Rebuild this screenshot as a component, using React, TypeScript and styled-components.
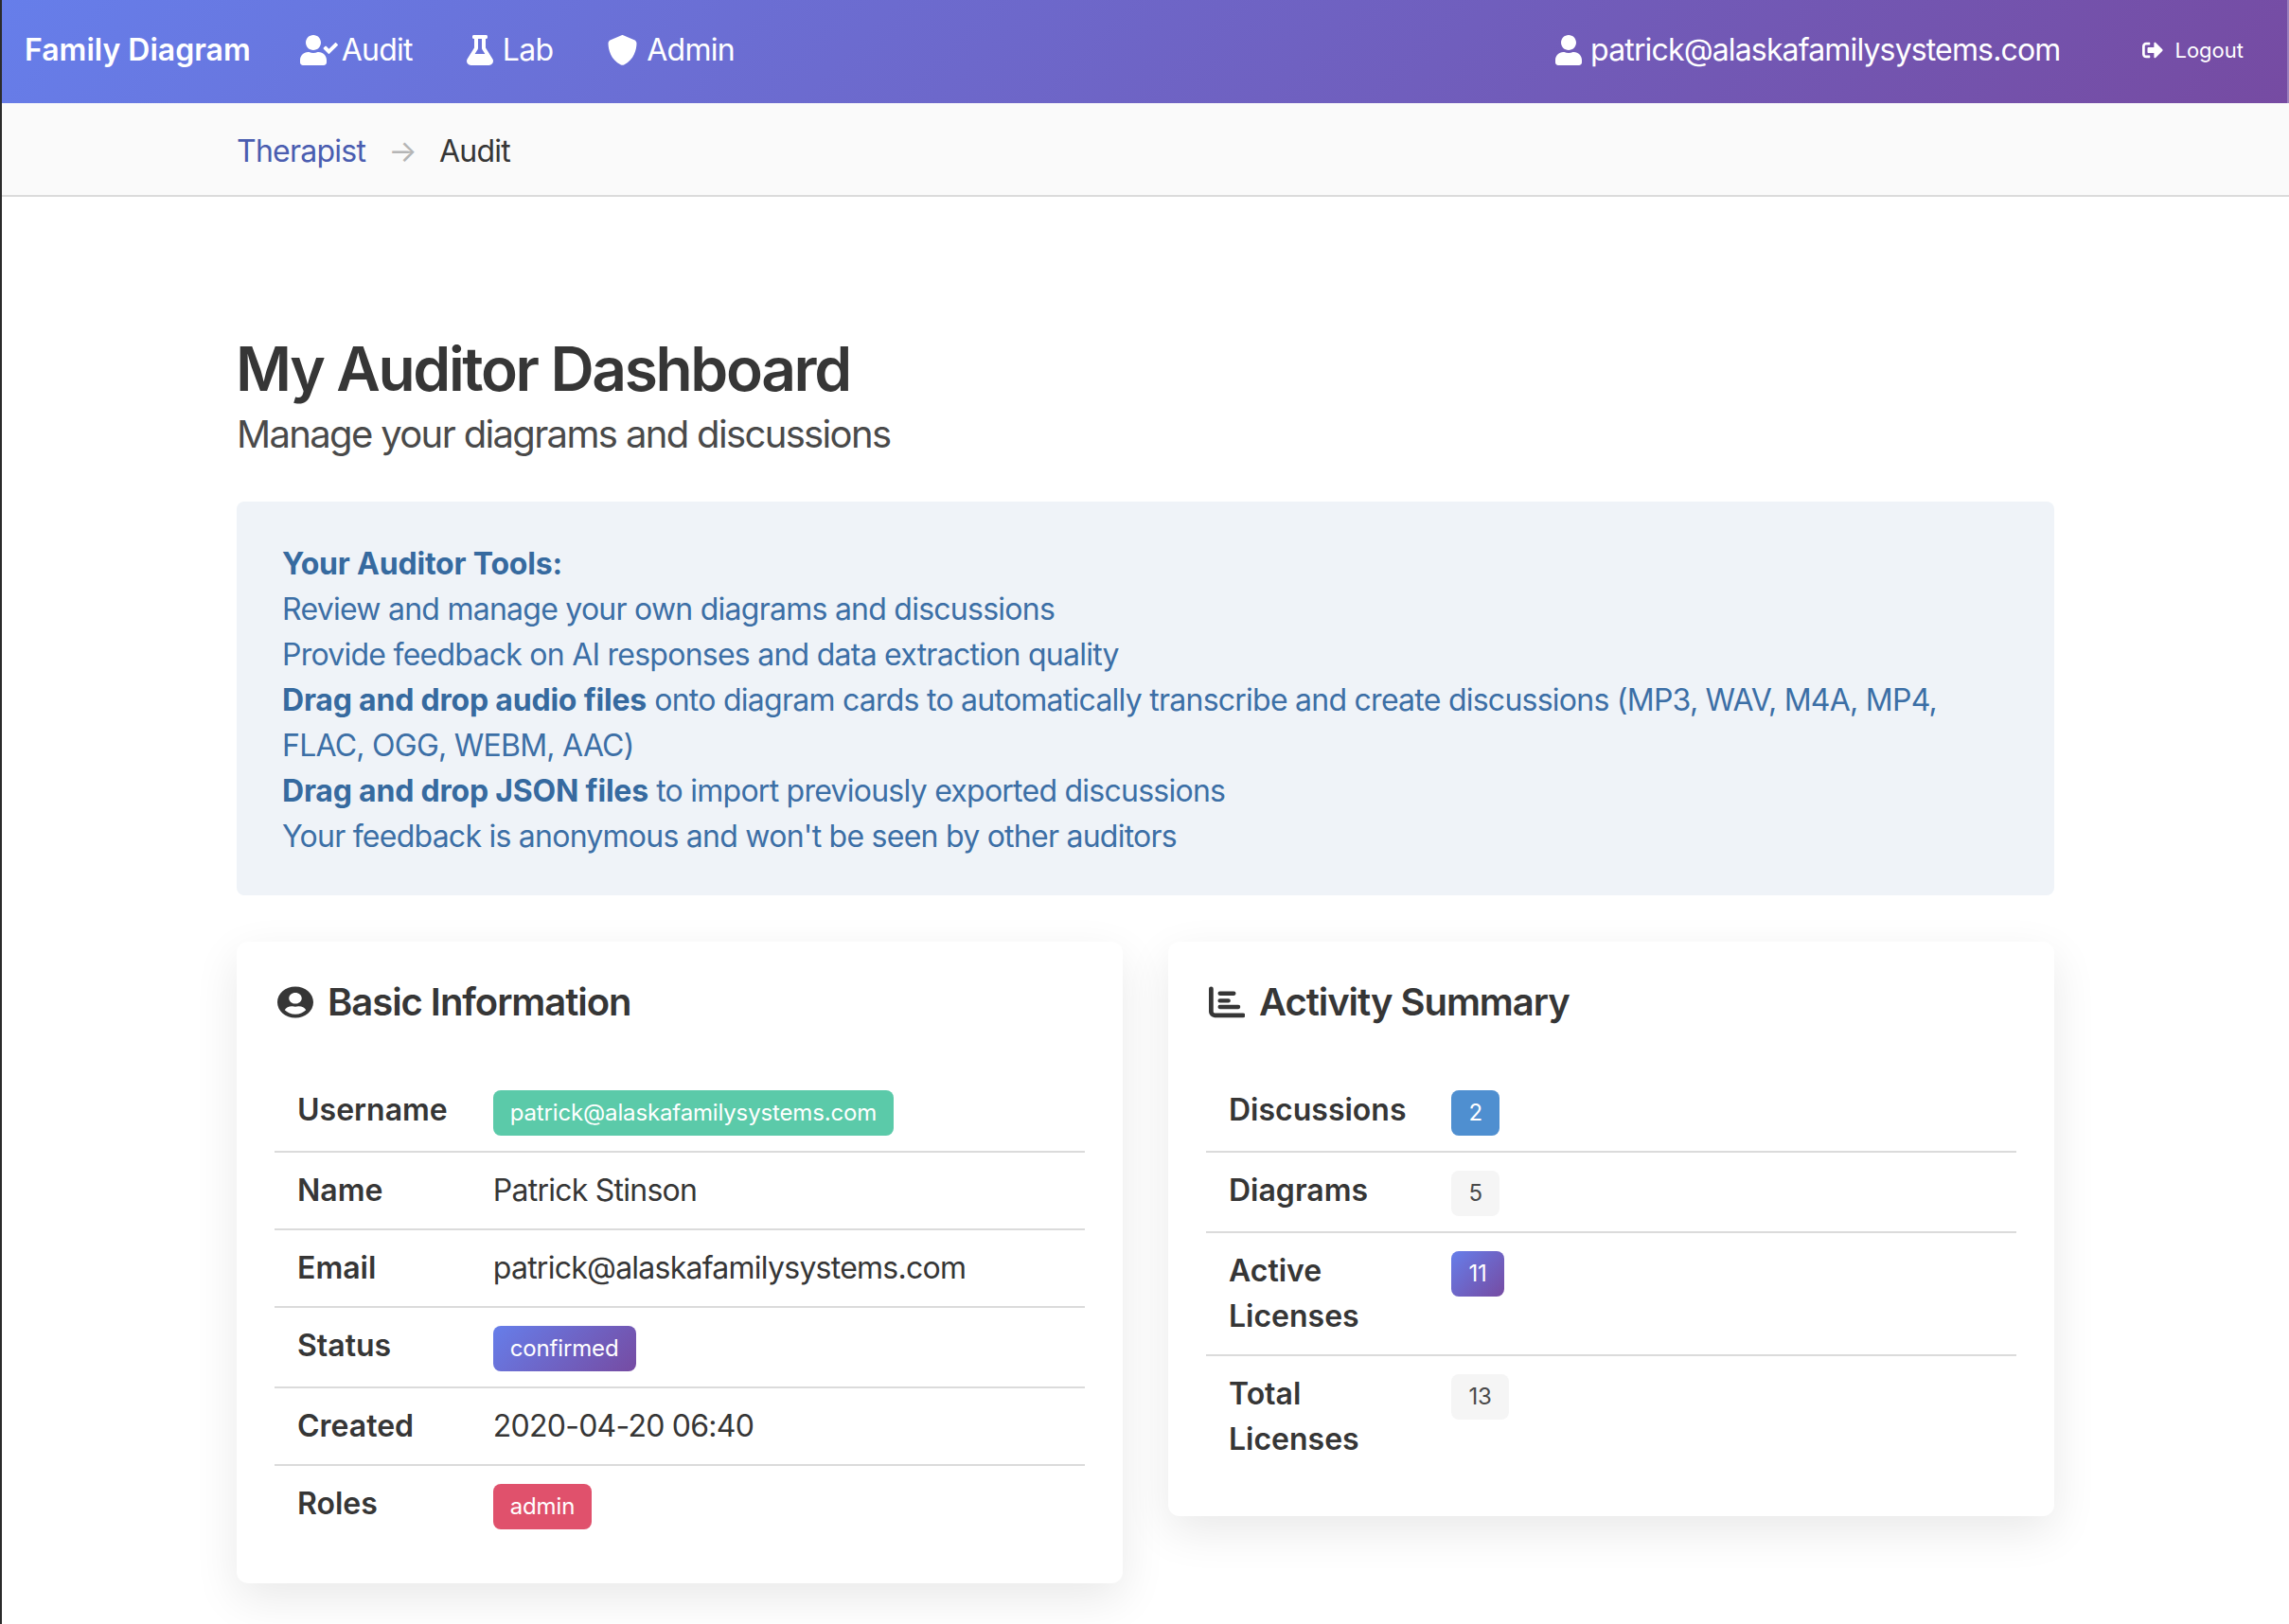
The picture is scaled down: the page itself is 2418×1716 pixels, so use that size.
import { createGlobalStyle, styled } from 'styled-components';
import { FaFlask, FaSignOutAlt, FaUser, FaUserCheck, FaUserCircle } from 'react-icons/fa';
import { FaShield } from 'react-icons/fa6';

const GlobalStyle = createGlobalStyle`
  html, body {
    margin: 0;
    padding: 0;
    background: #fff;
  }
  body {
    font-family: Inter, "Liberation Sans", sans-serif;
    font-size: 32px;
    line-height: 1.5;
    letter-spacing: -0.75px;
    color: #363636;
    border-left: 2px solid #2b2b2b;
    min-height: 1716px;
    overflow: hidden;
  }
  * {
    box-sizing: border-box;
  }
`;

const Navbar = styled.nav`
  display: flex;
  align-items: center;
  height: 109px;
  padding: 0 46px 3px 24px;
  background: linear-gradient(135deg, #667eea 0%, #764ba2 100%);
  border-right: 2px solid #9a80bd;
  color: #fff;
`;

const Brand = styled.div`
  font-weight: 600;
  letter-spacing: 0;
  margin-right: 52px;
`;

const NavItem = styled.div<{ $iconWidth: number; $gap: number }>`
  display: flex;
  align-items: center;
  gap: ${(p) => p.$gap}px;
  margin-right: 57px;
  svg {
    flex: none;
    height: 32px;
    width: ${(p) => p.$iconWidth}px;
  }
`;

const NavEnd = styled.div`
  margin-left: auto;
  display: flex;
  align-items: center;
`;

const UserItem = styled(NavItem)`
  margin-right: 87px;
  letter-spacing: -0.85px;
`;

const LogoutItem = styled.div`
  display: flex;
  align-items: center;
  gap: 12px;
  font-size: 22px;
  letter-spacing: 0;
  svg {
    font-size: 22px;
  }
`;

const BreadcrumbBar = styled.div`
  height: 99px;
  background: #fafafa;
  border-bottom: 2px solid #dbdbdb;
`;

const Container = styled.div`
  width: 1920px;
  margin: 0 auto;
`;

const Crumbs = styled(Container)`
  display: flex;
  align-items: center;
  height: 97px;
  padding-top: 4px;
`;

const CrumbLink = styled.span`
  color: #4a5db0;
`;

const CrumbArrow = styled.span`
  color: #b5b5b5;
  margin: 0 24px;
`;

const Main = styled(Container)`
  padding-top: 146px;
`;

const Title = styled.h1`
  margin: 0 0 0 -1px;
  font-size: 64px;
  font-weight: 600;
  line-height: 1.125;
  letter-spacing: -2.35px;
  color: #363636;
`;

const Subtitle = styled.h2`
  margin: 8px 0 46px;
  font-size: 40px;
  font-weight: 400;
  line-height: 1.25;
  letter-spacing: -1.65px;
  color: #4a4a4a;
`;

const Notice = styled.div`
  padding: 42px 80px 38px 48px;
  background: #eff3f8;
  border-radius: 8px;
  color: #3c6fa6;
  strong {
    font-weight: 700;
    letter-spacing: -0.2px;
    color: #366a9f;
  }
`;

const Columns = styled.div`
  display: grid;
  grid-template-columns: 1fr 1fr;
  gap: 48px;
  margin-top: 49px;
  align-items: start;
`;

const Card = styled.section`
  background: #fff;
  border-radius: 12px;
  padding: 39px 40px 41px;
  box-shadow: 0 16px 48px rgba(0, 0, 0, 0.09);
`;

const CardTitle = styled.h3`
  display: flex;
  align-items: center;
  gap: 15px;
  margin: 0 0 49px;
  padding-left: 3px;
  font-size: 40px;
  font-weight: 600;
  line-height: 1.25;
  letter-spacing: -1.05px;
  color: #363636;
  svg {
    flex: none;
    width: 38px;
    height: 34px;
  }
`;

const Table = styled.table`
  width: 100%;
  border-collapse: collapse;
  border-spacing: 0;
`;

const Row = styled.tr`
  border-bottom: 2px solid #dbdbdb;
  &:last-child {
    border-bottom: 0;
  }
`;

const Label = styled.th`
  padding: 16px 24px;
  font-weight: 600;
  letter-spacing: 0;
  text-align: left;
  vertical-align: top;
  color: #363636;
`;

const Value = styled.td`
  width: 100%;
  padding: 16px 24px;
  vertical-align: top;
`;

const tagColors = {
  success: 'background: #5bcaa9; color: #fff;',
  info: 'background: #4f8fd0; color: #fff;',
  danger: 'background: #e0516c; color: #fff;',
  gradient: 'background: linear-gradient(135deg, #667eea 0%, #764ba2 100%); color: #fff;',
  light: 'background: #f5f5f5; color: #4a4a4a;',
};

const Tag = styled.span<{ $kind: keyof typeof tagColors }>`
  display: inline-flex;
  align-items: center;
  justify-content: center;
  height: 48px;
  padding: 0 18px;
  border-radius: 8px;
  font-size: 24px;
  line-height: 1.5;
  letter-spacing: -0.15px;
  ${(p) => tagColors[p.$kind]}
`;

function ChartIcon() {
  return (
    <svg viewBox="0 0 40 34" fill="currentColor" aria-hidden="true">
      <path
        d="M2.5 2V27.5a4 4 0 0 0 4 4H38"
        fill="none"
        stroke="currentColor"
        strokeWidth="5"
        strokeLinecap="round"
      />
      <rect x="10" y="5" width="20" height="4.5" rx="2.2" />
      <rect x="10" y="13" width="14" height="4.5" rx="2.2" />
      <rect x="10" y="20" width="25" height="4.5" rx="2.2" />
    </svg>
  );
}

export default function App() {
  return (
    <>
      <GlobalStyle />
      <Navbar>
        <Brand>Family Diagram</Brand>
        <NavItem $iconWidth={40} $gap={4}>
          <FaUserCheck />
          Audit
        </NavItem>
        <NavItem $iconWidth={28} $gap={10}>
          <FaFlask />
          Lab
        </NavItem>
        <NavItem $iconWidth={33} $gap={9}>
          <FaShield />
          Admin
        </NavItem>
        <NavEnd>
          <UserItem $iconWidth={28} $gap={9}>
            <FaUser />
            patrick@alaskafamilysystems.com
          </UserItem>
          <LogoutItem>
            <FaSignOutAlt />
            Logout
          </LogoutItem>
        </NavEnd>
      </Navbar>
      <BreadcrumbBar>
        <Crumbs>
          <CrumbLink>Therapist</CrumbLink>
          <CrumbArrow>→</CrumbArrow>
          <span>Audit</span>
        </Crumbs>
      </BreadcrumbBar>
      <Main>
        <Title>My Auditor Dashboard</Title>
        <Subtitle>Manage your diagrams and discussions</Subtitle>
        <Notice>
          <strong>Your Auditor Tools:</strong>
          <br />
          Review and manage your own diagrams and discussions
          <br />
          Provide feedback on AI responses and data extraction quality
          <br />
          <strong>Drag and drop audio files</strong> onto diagram cards to automatically transcribe
          and create discussions (MP3, WAV, M4A, MP4, FLAC, OGG, WEBM, AAC)
          <br />
          <strong>Drag and drop JSON files</strong> to import previously exported discussions
          <br />
          Your feedback is anonymous and won't be seen by other auditors
        </Notice>
        <Columns>
          <Card>
            <CardTitle>
              <FaUserCircle preserveAspectRatio="none" />
              Basic Information
            </CardTitle>
            <Table>
              <tbody>
                <Row>
                  <Label>Username</Label>
                  <Value>
                    <Tag $kind="success">patrick@alaskafamilysystems.com</Tag>
                  </Value>
                </Row>
                <Row>
                  <Label>Name</Label>
                  <Value>Patrick Stinson</Value>
                </Row>
                <Row>
                  <Label>Email</Label>
                  <Value>patrick@alaskafamilysystems.com</Value>
                </Row>
                <Row>
                  <Label>Status</Label>
                  <Value>
                    <Tag $kind="gradient">confirmed</Tag>
                  </Value>
                </Row>
                <Row>
                  <Label>Created</Label>
                  <Value>2020-04-20 06:40</Value>
                </Row>
                <Row>
                  <Label>Roles</Label>
                  <Value>
                    <Tag $kind="danger">admin</Tag>
                  </Value>
                </Row>
              </tbody>
            </Table>
          </Card>
          <Card>
            <CardTitle>
              <ChartIcon />
              Activity Summary
            </CardTitle>
            <Table>
              <tbody>
                <Row>
                  <Label>Discussions</Label>
                  <Value>
                    <Tag $kind="info">2</Tag>
                  </Value>
                </Row>
                <Row>
                  <Label>Diagrams</Label>
                  <Value>
                    <Tag $kind="light">5</Tag>
                  </Value>
                </Row>
                <Row>
                  <Label>Active Licenses</Label>
                  <Value>
                    <Tag $kind="gradient">11</Tag>
                  </Value>
                </Row>
                <Row>
                  <Label>Total Licenses</Label>
                  <Value>
                    <Tag $kind="light">13</Tag>
                  </Value>
                </Row>
              </tbody>
            </Table>
          </Card>
        </Columns>
      </Main>
    </>
  );
}
